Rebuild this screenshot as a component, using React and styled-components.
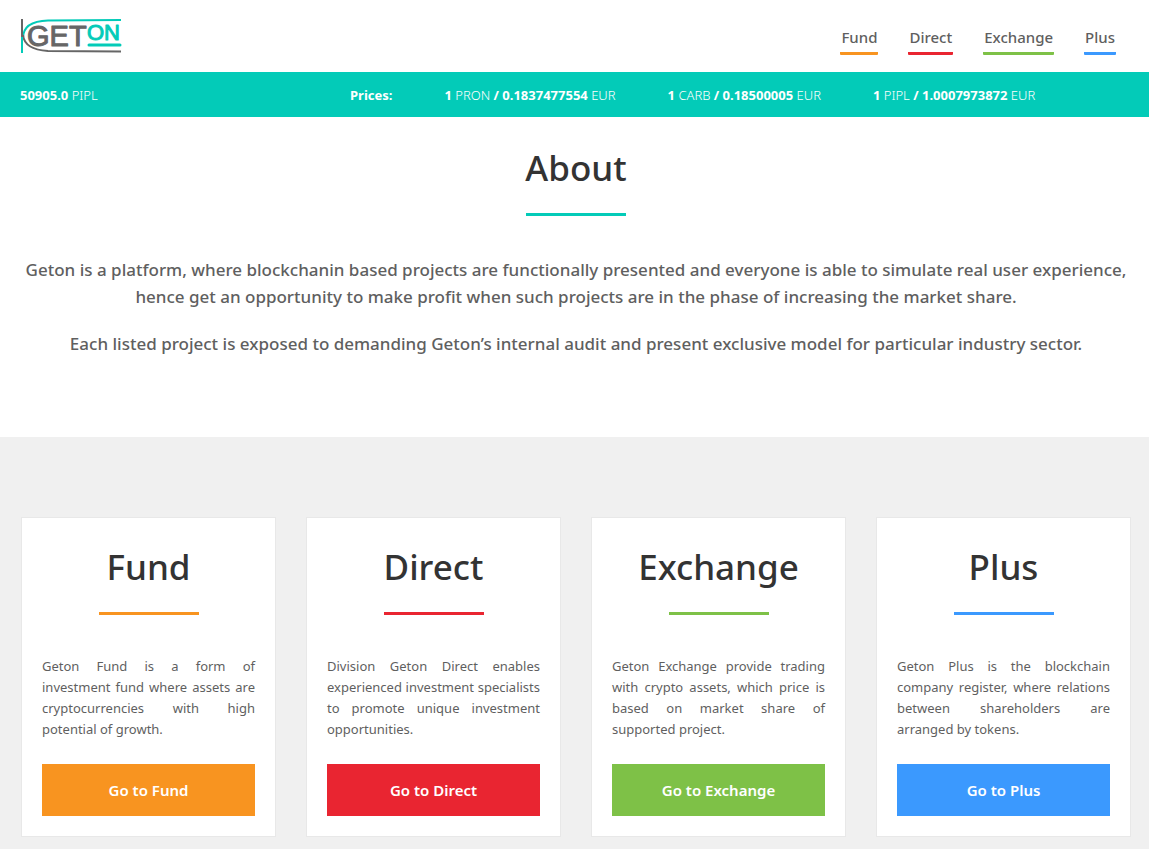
import React from "react";
import styled, { createGlobalStyle } from "styled-components";

const GlobalStyle = createGlobalStyle`
  *, *::before, *::after { box-sizing: border-box; }
  body {
    margin: 0;
    background: #f0f0f0;
    color: #5f5f5f;
    font-family: "Noto Sans", "Open Sans", sans-serif;
    font-size: 13px;
    line-height: 21px;
  }
`;

const colors = {
  teal: "#03cbb8",
  orange: "#f89420",
  red: "#e92531",
  green: "#7ec147",
  blue: "#3b99fe",
};

const Header = styled.header`
  display: flex;
  align-items: center;
  justify-content: space-between;
  height: 72px;
  padding: 0 33px 0 20px;
  background: #fff;
`;

const LogoLink = styled.a`
  display: block;
  line-height: 0;
`;

const Nav = styled.nav`
  display: flex;
  gap: 30px;
  padding-top: 7px;
`;

const NavLink = styled.a`
  padding: 0 1px 3px;
  border-bottom: 3px solid ${(p) => p.$color};
  border-radius: 1px;
  color: #5f5f5f;
  font-size: 15px;
  font-weight: 500;
  line-height: 24px;
  text-decoration: none;
`;

const Strip = styled.section`
  display: grid;
  grid-template-columns: 330px 1fr;
  align-items: center;
  min-height: 45px;
  padding: 2px 18px 0 20px;
  background: ${colors.teal};
  color: #fff;
  font-weight: 300;
`;

const Prices = styled.div`
  display: flex;
  gap: 52px;
  white-space: nowrap;
`;

const Strong = styled.strong`
  font-weight: 700;
`;

const About = styled.section`
  min-height: 320px;
  padding: 27px 18px 80px 21px;
  background: #fff;
  text-align: center;
`;

const Title = styled.h2`
  margin: 0;
  color: #333;
  font-size: 35px;
  font-weight: 500;
  line-height: 48px;
  text-align: center;

  &::after {
    content: "";
    display: block;
    width: 100px;
    height: 3px;
    margin: 21px auto 0;
    background: ${(p) => p.$color};
  }
`;

const Lead = styled.p`
  margin: 0 0 20px;
  font-size: 17px;
  font-weight: 500;
  line-height: 27px;

  ${Title} + & { margin-top: 40px; }
  &:last-child { margin-bottom: 0; }
`;

const Cards = styled.main`
  display: grid;
  grid-template-columns: repeat(4, 1fr);
  gap: 30px;
  padding: 80px 18px 12px 21px;
`;

const Card = styled.article`
  display: flex;
  flex-direction: column;
  min-height: 320px;
  padding: 25px 20px 20px;
  border: 1px solid #e8e8e8;
  background: #fff;
`;

const CardText = styled.p`
  margin: 41px 0 20px;
  text-align: justify;
`;

const CardButton = styled.a`
  display: block;
  margin-top: auto;
  padding: 14px 10px;
  background: ${(p) => p.$color};
  color: #fff;
  font-size: 15px;
  font-weight: 600;
  line-height: 24px;
  text-align: center;
  text-decoration: none;
`;

const sections = [
  { name: "Fund", color: colors.orange, text: "Geton Fund is a form of investment fund where assets are cryptocurrencies with high potential of growth." },
  { name: "Direct", color: colors.red, text: "Division Geton Direct enables experienced investment specialists to promote unique investment opportunities." },
  { name: "Exchange", color: colors.green, text: "Geton Exchange provide trading with crypto assets, which price is based on market share of supported project." },
  { name: "Plus", color: colors.blue, text: "Geton Plus is the blockchain company register, where relations between shareholders are arranged by tokens." },
];

const prices = [
  { token: "PRON", value: "0.1837477554" },
  { token: "CARB", value: "0.18500005" },
  { token: "PIPL", value: "1.0007973872" },
];

const LogoText = styled.text`
  font-family: "Liberation Sans", Arial, sans-serif;
  font-weight: 400;
  stroke-width: 1px;
  stroke-linejoin: round;
`;

function Logo() {
  return (
    <svg width="102" height="36" viewBox="0 0 102 36" fill="none" role="img" aria-label="Geton">
      <path d="M3 20C3 9 12 3 28 2.500L101 2" stroke={colors.teal} strokeWidth="2" />
      <path d="M3 17C4 27 12 32 28 33L101 33.500" stroke="#666" strokeWidth="2" />
      <path d="M2 1V19" stroke="#666" strokeWidth="2" />
      <path d="M2 19V35" stroke={colors.teal} strokeWidth="2" />
      <LogoText x="7" y="28" fill="#666" stroke="#666" fontSize="29">GET</LogoText>
      <LogoText x="67" y="22" fill={colors.teal} stroke={colors.teal} fontSize="22">ON</LogoText>
      <path d="M69 27H100" stroke={colors.teal} strokeWidth="3" strokeLinecap="round" />
    </svg>
  );
}

export default function App() {
  return (
    <>
      <GlobalStyle />
      <Header>
        <LogoLink href="#home"><Logo /></LogoLink>
        <Nav>
          {sections.map((s) => (
            <NavLink key={s.name} href={`#${s.name}`} $color={s.color}>{s.name}</NavLink>
          ))}
        </Nav>
      </Header>
      <Strip>
        <div><Strong>50905.0</Strong> PIPL</div>
        <Prices>
          <Strong>Prices:</Strong>
          {prices.map((p) => (
            <span key={p.token}>
              <Strong>1</Strong> {p.token} <Strong>/ {p.value}</Strong> EUR
            </span>
          ))}
        </Prices>
      </Strip>
      <About>
        <Title $color={colors.teal}>About</Title>
        <Lead>
          Geton is a platform, where blockchanin based projects are functionally presented and everyone is able to simulate real user experience, hence get an opportunity to make profit when such projects are in the phase of increasing the market share.
        </Lead>
        <Lead>
          Each listed project is exposed to demanding Geton’s internal audit and present exclusive model for particular industry sector.
        </Lead>
      </About>
      <Cards>
        {sections.map((s) => (
          <Card key={s.name} id={s.name}>
            <Title $color={s.color}>{s.name}</Title>
            <CardText>{s.text}</CardText>
            <CardButton href={`#${s.name}`} $color={s.color}>Go to {s.name}</CardButton>
          </Card>
        ))}
      </Cards>
    </>
  );
}
